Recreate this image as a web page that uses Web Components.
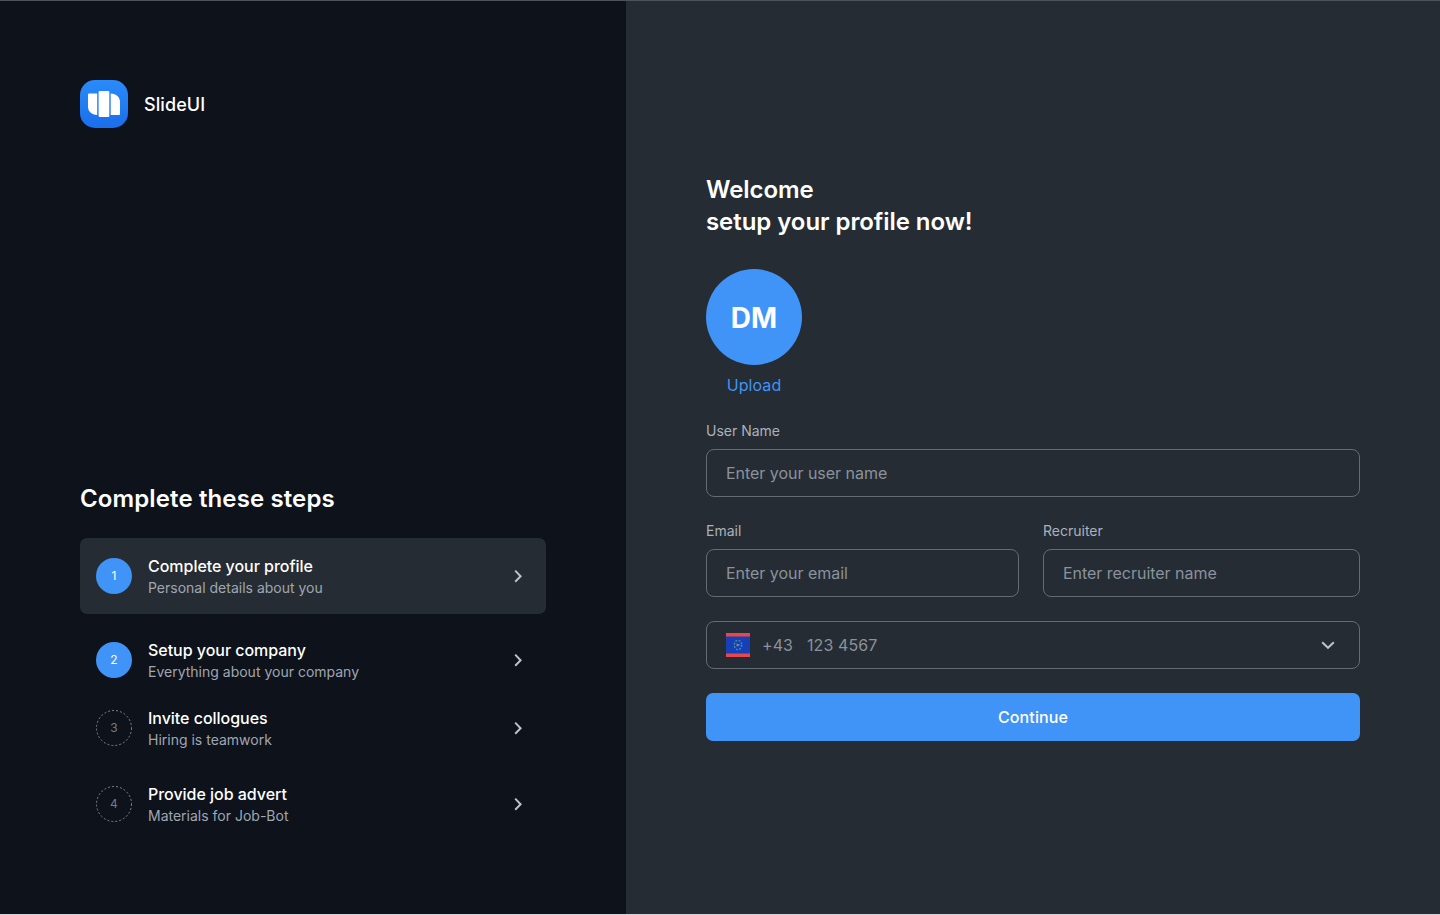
<!DOCTYPE html>
<html lang="en">
<head>
<meta charset="utf-8">
<title>SlideUI – Set up your profile</title>
<style>
  html, body { margin: 0; height: 100%; overflow: hidden; }
  body { font-family: Inter, "Liberation Sans", sans-serif; color: #fff; background: #0d121b; }
</style>
</head>
<body>
<onboarding-page></onboarding-page>
<script>
const define = (name, html) => {
  const template = document.createElement('template');
  template.innerHTML = html;
  customElements.define(name, class extends HTMLElement {
    constructor() {
      super();
      this.attachShadow({ mode: 'open' }).append(template.content.cloneNode(true));
    }
  });
};

define('brand-mark', `
<style>
  :host { display: flex; align-items: center; gap: 16px; height: 48px; font-size: 18px; font-weight: 500; line-height: 24px; letter-spacing: .08px; }
  svg { display: block; flex: none; }
  span { padding-top: 2px; }
</style>
<svg width="48" height="48" viewBox="0 0 48 48">
  <defs><linearGradient id="g" x1="0" y1="0" x2="0" y2="1"><stop offset="0" stop-color="#2b8bfa"/><stop offset="1" stop-color="#1a6eea"/></linearGradient></defs>
  <rect width="48" height="48" rx="15" fill="url(#g)"/>
  <path d="M9 13.500h8.200v21.400C11.600 34.900 8 31.500 8 26.500V14.500a1 1 0 0 1 1-1z" fill="#fff"/>
  <rect x="18.600" y="11" width="10.700" height="26" rx="1" fill="#fff"/>
  <path d="M30.700 13.500c5.500 0 9.300 3.600 9.300 8.600v11.800a1 1 0 0 1-1 1h-8.300z" fill="#fff"/>
</svg>
<span><slot></slot></span>
`);

define('step-item', `
<style>
  :host { display: flex; align-items: center; gap: 16px; height: 44px; padding: 16px; border-radius: 7px; }
  :host([active]) { background: #252c33; margin-bottom: 8px; }
  :host([compact]) { padding-bottom: 8px; }
  .badge { position: relative; display: grid; place-items: center; width: 36px; height: 36px; flex: none; border-radius: 50%; background: #4094f7; font-size: 12px; line-height: 16px; }
  .badge svg { display: none; position: absolute; inset: 0; }
  :host([pending]) .badge { background: none; color: #757c87; }
  :host([pending]) .badge svg { display: block; }
  .text { flex: 1; }
  .title { font-size: 16px; line-height: 24px; font-weight: 500; letter-spacing: -.03px; }
  .note { font-size: 14px; line-height: 20px; color: #a0a6b1; }
  .chevron { display: block; flex: none; }
</style>
<div class="badge"><svg width="36" height="36"><circle cx="18" cy="18" r="17.500" fill="none" stroke="#7e8590" stroke-dasharray="2 2"/></svg><slot name="number"></slot></div>
<div class="text"><div class="title"><slot></slot></div><div class="note"><slot name="note"></slot></div></div>
<svg class="chevron" width="24" height="24" viewBox="0 0 24 24"><path d="M9.200 6.600 14.600 12.200l-5.400 5.600" fill="none" stroke="#bcc1cb" stroke-width="2"/></svg>
`);

define('steps-panel', `
<style>
  :host { display: flex; flex-direction: column; justify-content: space-between; box-sizing: border-box; width: 626px; flex: none; padding: 79px 80px 72px; background: #0d121b; }
  h2 { margin: 0 0 23px; font-size: 24px; line-height: 32px; font-weight: 600; letter-spacing: .12px; }
</style>
<brand-mark>SlideUI</brand-mark>
<section>
  <h2>Complete these steps</h2>
  <step-item active><span slot="number">1</span>Complete your profile<span slot="note">Personal details about you</span></step-item>
  <step-item compact><span slot="number">2</span>Setup your company<span slot="note">Everything about your company</span></step-item>
  <step-item pending><span slot="number">3</span>Invite collogues<span slot="note">Hiring is teamwork</span></step-item>
  <step-item pending><span slot="number">4</span>Provide job advert<span slot="note">Materials for Job-Bot</span></step-item>
</section>
`);

define('form-field', `
<style>
  :host { display: block; }
  label { display: block; height: 20px; margin-bottom: 8px; font-size: 14px; line-height: 20px; color: #abb1bb; }
  .box { display: flex; align-items: center; box-sizing: border-box; height: 48px; padding: 0 19px; border: 1px solid #646b75; border-radius: 8px; color: #8b929c; font-size: 16px; line-height: 24px; letter-spacing: -.03px; }
</style>
<label><slot name="label"></slot></label>
<div class="box"><slot></slot></div>
`);

define('phone-field', `
<style>
  :host { display: flex; align-items: center; box-sizing: border-box; height: 48px; padding: 0 19px; border: 1px solid #646b75; border-radius: 8px; color: #8b929c; font-size: 16px; line-height: 24px; letter-spacing: .1px; }
  svg { display: block; flex: none; }
  .code { margin-left: 12px; width: 45px; }
  .number { flex: 1; }
</style>
<svg width="24" height="24" viewBox="0 0 24 24">
  <rect width="24" height="24" fill="#e8484c"/>
  <rect y="3.500" width="24" height="17" fill="#173fb8"/>
  <ellipse cx="12" cy="12" rx="3.700" ry="4.700" fill="none" stroke="#3a9a9c" stroke-width="1.400" stroke-dasharray="1.800 1.520"/>
  <rect x="10.500" y="10.800" width="1.500" height="2.400" fill="#d66b58"/><rect x="12" y="11" width="1.500" height="2" fill="#3d8ed0"/>
</svg>
<span class="code">+43</span><span class="number">123 4567</span>
<svg width="24" height="24" viewBox="0 0 24 24"><path d="M6.200 9.200 12 14.800l5.800-5.600" fill="none" stroke="#bcc1cb" stroke-width="2"/></svg>
`);

define('avatar-upload', `
<style>
  :host { display: flex; flex-direction: column; align-items: center; width: 96px; gap: 8px; }
  .avatar { display: grid; place-items: center; box-sizing: border-box; width: 96px; height: 96px; padding-top: 2px; border-radius: 50%; background: #4094f7; font-size: 28px; line-height: 36px; font-weight: 700; }
  .link { color: #4094f7; font-size: 16px; line-height: 24px; letter-spacing: .1px; }
</style>
<div class="avatar"><slot></slot></div>
<div class="link"><slot name="action"></slot></div>
`);

define('primary-button', `
<style>
  :host { display: flex; align-items: center; justify-content: center; height: 48px; border-radius: 7px; background: #4094f7; font-size: 16px; line-height: 24px; font-weight: 500; letter-spacing: .1px; }
</style>
<slot></slot>
`);

define('profile-form', `
<style>
  :host { display: flex; flex-direction: column; flex: 1; box-sizing: border-box; padding: 173px 80px 0; background: #252c33; }
  h1 { margin: 0 0 31px; font-size: 24px; line-height: 32px; font-weight: 600; letter-spacing: -.06px; }
  avatar-upload { margin-bottom: 24px; }
  .row { display: grid; grid-template-columns: 313px 1fr; gap: 24px; margin: 24px 0; }
  phone-field { margin-bottom: 24px; }
</style>
<h1>Welcome<br>setup your profile now!</h1>
<avatar-upload>DM<span slot="action">Upload</span></avatar-upload>
<form-field><span slot="label">User Name</span>Enter your user name</form-field>
<div class="row">
  <form-field><span slot="label">Email</span>Enter your email</form-field>
  <form-field><span slot="label">Recruiter</span>Enter recruiter name</form-field>
</div>
<phone-field></phone-field>
<primary-button>Continue</primary-button>
`);

define('onboarding-page', `
<style>
  :host { display: flex; box-sizing: border-box; width: 1440px; height: 915px; border-top: 1px solid #4c535b; border-bottom: 1px solid #d2d4d6; }
</style>
<steps-panel></steps-panel>
<profile-form></profile-form>
`);
</script>
</body>
</html>
